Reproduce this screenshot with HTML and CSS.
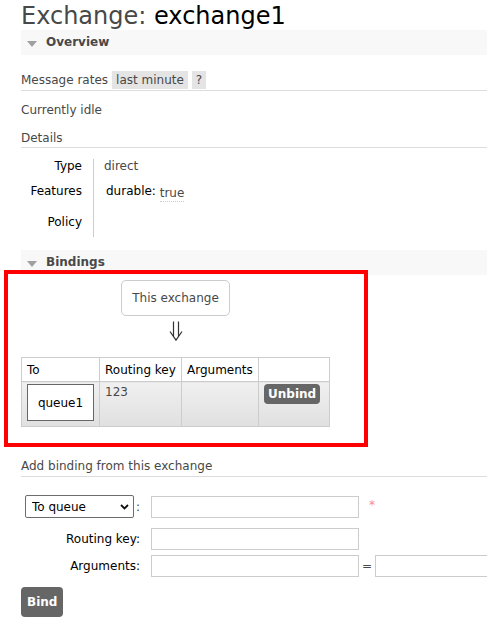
FILE: index.html
```html
<!DOCTYPE html>
<html>
<head>
<meta charset="utf-8">
<title>Exchange: exchange1</title>
<link rel="stylesheet" href="styles.css">
</head>
<body>
<div class="page">
  <h1 class="title"><span class="title-pre">Exchange:</span> <b class="title-name">exchange1</b></h1>

  <section class="section">
    <h2 class="section-head"><span class="tri"></span>Overview</h2>
    <div class="rates">
      <span class="rates-label">Message rates</span>
      <span class="tag">last minute</span>
      <span class="tag">?</span>
    </div>
    <p class="idle">Currently idle</p>
    <h3 class="sub">Details</h3>
    <table class="facts">
      <tr class="r1"><th>Type</th><td>direct</td></tr>
      <tr class="r2"><th>Features</th><td><b class="feat">durable:</b> <span class="val">true</span></td></tr>
      <tr class="r3"><th>Policy</th><td></td></tr>
    </table>
  </section>

  <section class="section bindings">
    <h2 class="section-head"><span class="tri"></span>Bindings</h2>
    <div class="bind-diagram">
      <div class="this-ex">This exchange</div>
      <svg class="arrow" width="14" height="20" viewBox="0 0 14 20">
        <path d="M4.5 0.5 V15.3 M9.5 0.5 V15.3 M1 10.5 L7 19.2 L13 10.5" fill="none" stroke="#333" stroke-width="1.2"/>
      </svg>
      <table class="list">
        <thead>
          <tr><th class="c1">To</th><th class="c2">Routing key</th><th class="c3">Arguments</th><th class="c4"></th></tr>
        </thead>
        <tbody>
          <tr>
            <td><span class="queue">queue1</span></td>
            <td class="rk">123</td>
            <td></td>
            <td><button class="btn btn-small" type="button">Unbind</button></td>
          </tr>
        </tbody>
      </table>
    </div>

    <h3 class="sub add">Add binding from this exchange</h3>
    <form class="form">
      <div class="frow row1">
        <div class="flabel">
          <span class="selwrap">
            <select class="sel"><option>To queue</option><option>To exchange</option></select>
            <svg class="chev" width="9" height="6" viewBox="0 0 9 6"><path d="M1 1 L4.5 4.5 L8 1" fill="none" stroke="#111" stroke-width="1.8"/></svg>
          </span><span class="colon">:</span>
        </div>
        <input class="inp" type="text"><span class="mand">*</span>
      </div>
      <div class="frow row2">
        <label class="flabel">Routing key:</label>
        <input class="inp" type="text">
      </div>
      <div class="frow row3">
        <label class="flabel">Arguments:</label>
        <input class="inp" type="text"><span class="eq">=</span><input class="inp" type="text">
      </div>
      <button class="btn btn-bind" type="button">Bind</button>
    </form>
  </section>

  <div class="annot"></div>
</div>
</body>
</html>
```

FILE: styles.css
```css
html, body {
  margin: 0;
  padding: 0;
  background: #fff;
}

body {
  font: 12px/14px "DejaVu Sans", Verdana, sans-serif;
  color: #484848;
  overflow: hidden;
}

.page {
  position: relative;
  box-sizing: border-box;
  width: 100%;
  padding-left: 21px;
  overflow: hidden;
}

.title {
  margin: 3px 0 0;
  font-size: 24px;
  line-height: 27px;
  font-weight: normal;
  color: #484848;
  white-space: nowrap;
}

.title-name {
  color: #000;
  font-weight: normal;
}

.section-head {
  margin: 0;
  height: 25px;
  display: flex;
  align-items: center;
  padding-left: 6px;
  background: #f8f8f8;
  font-size: 12px;
  line-height: 25px;
  font-weight: bold;
  color: #484848;
}

.tri {
  width: 0;
  height: 0;
  margin: 2px 9px 0 0;
  border-left: 5px solid transparent;
  border-right: 5px solid transparent;
  border-top: 6px solid #a0a0a0;
}

.rates {
  margin-top: 16px;
  height: 19px;
  display: flex;
  align-items: flex-start;
  gap: 4px;
  line-height: 19px;
  border-bottom: 1px solid #ddd;
}

.tag {
  height: 18px;
  line-height: 18px;
  padding: 0 4px;
  background: #e4e4e4;
}

.idle {
  margin: 12px 0 0;
}

.sub {
  margin: 14px 0 0;
  padding-bottom: 2px;
  font-size: 12px;
  line-height: 14px;
  font-weight: normal;
  color: #484848;
  border-bottom: 1px solid #ddd;
}

.facts {
  margin-top: 11px;
  border-collapse: collapse;
}

.facts th {
  width: 61px;
  padding: 0 11px 0 0;
  text-align: right;
  vertical-align: top;
  font-weight: normal;
  color: #000;
}

.facts td {
  padding: 0 0 0 10px;
  vertical-align: top;
  border-left: 1px solid #ccc;
}

.facts .r1 { height: 25px; }
.facts .r2 { height: 31px; }
.facts .r3 { height: 22px; }

.feat {
  margin-left: 2px;
  color: #000;
  font-weight: normal;
}

.val {
  display: inline-block;
  vertical-align: -2px;
  padding-bottom: 1px;
  border-bottom: 1px dotted #ccc;
}

.bindings {
  margin-top: 13px;
}

.bind-diagram {
  width: 309px;
  margin-top: 5px;
  display: flex;
  flex-direction: column;
  align-items: center;
}

.this-ex {
  padding: 10px;
  border: 1px solid #ccc;
  border-radius: 5px;
  color: #484848;
}

.arrow {
  display: block;
  margin: 5px 0 16px;
}

.list {
  border-collapse: collapse;
  table-layout: fixed;
  width: 309px;
}

.list th {
  padding: 5px 5px 4px;
  text-align: left;
  font-weight: normal;
  color: #000;
  border: 1px solid #ccc;
  background: #fff;
  white-space: nowrap;
}

.list .c1 { width: 67px; }
.list .c2 { width: 71px; }
.list .c3 { width: 66px; }
.list .c4 { width: 60px; }

.list tbody tr {
  height: 45px;
}

.list td {
  padding: 2px 5px;
  vertical-align: top;
  border: 1px solid #ccc;
  background: linear-gradient(#f0f0f0, #e0e0e0);
}

.list td.rk {
  padding-top: 3px;
}

.queue {
  display: block;
  padding: 11px 0 10px;
  border: 1px solid #666;
  background: #fff;
  color: #000;
  text-align: center;
}

.btn {
  border: none;
  border-radius: 4px;
  background: #666;
  color: #fff;
  font: bold 12px/14px "DejaVu Sans", Verdana, sans-serif;
  cursor: pointer;
}

.btn-small {
  padding: 3px 4px;
}

.sub.add {
  margin-top: 32px;
  padding-bottom: 3px;
}

.form {
  margin: 18px 0 0;
}

.frow {
  display: flex;
  align-items: center;
  height: 23px;
}

.row2 { margin-top: 9px; }
.row3 { margin-top: 4px; }

.flabel {
  flex: none;
  width: 119px;
  margin-right: 11px;
  display: flex;
  justify-content: flex-end;
  align-items: center;
  color: #000;
  white-space: nowrap;
}

.selwrap {
  position: relative;
  display: block;
  flex: none;
  height: 23px;
}

.sel {
  -webkit-appearance: none;
  appearance: none;
  display: block;
  width: 109px;
  height: 23px;
  padding: 0 0 0 6px;
  border: 1px solid #6d6d6d;
  border-radius: 2px;
  background: #fff;
  color: #000;
  font: 12px/14px "DejaVu Sans", Verdana, sans-serif;
}

.chev {
  position: absolute;
  right: 5px;
  top: 9px;
  pointer-events: none;
}

.colon {
  margin-left: 2px;
  color: #484848;
}

.inp {
  box-sizing: border-box;
  flex: none;
  width: 208px;
  height: 22px;
  padding: 0 4px;
  border: 1px solid #ccc;
  border-radius: 0;
  background: #fff;
  font: 12px "DejaVu Sans", Verdana, sans-serif;
}

.mand {
  flex: none;
  align-self: flex-start;
  margin: 3px 0 0 10px;
  color: #f88;
}

.eq {
  flex: none;
  width: 16px;
  text-align: center;
  color: #484848;
}

.btn-bind {
  display: block;
  margin-top: 10px;
  padding: 8px 6px;
}

.annot {
  position: absolute;
  left: 4px;
  top: 270px;
  width: 364px;
  height: 177px;
  box-sizing: border-box;
  border: 4px solid #f00;
  pointer-events: none;
}
```
